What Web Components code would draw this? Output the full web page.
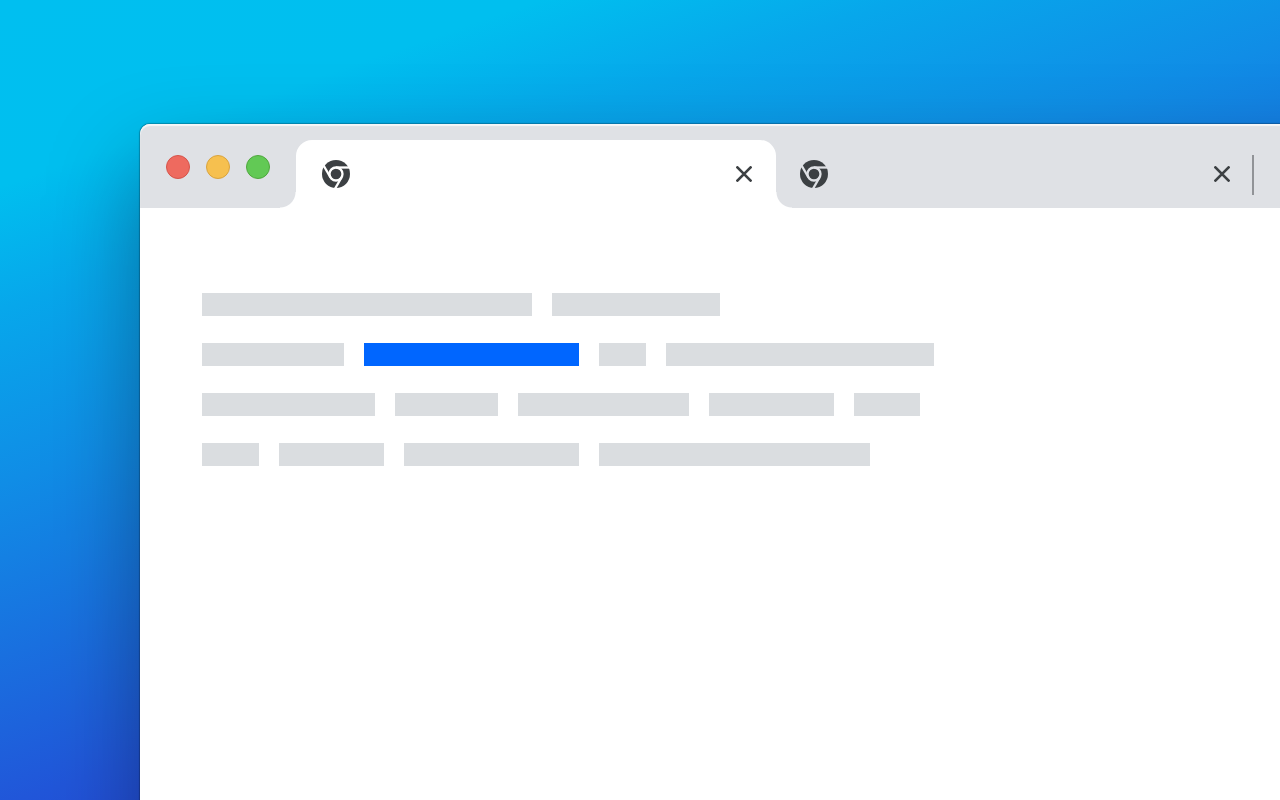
<!DOCTYPE html>
<html lang="en">
<head>
<meta charset="utf-8">
<title>Browser window</title>
<style>
  html, body { margin: 0; height: 100%; }
  body { overflow: hidden; font-family: Inter, "Liberation Sans", sans-serif; }
</style>
</head>
<body>
<desk-top>
  <browser-window>
    <window-controls slot="bar"></window-controls>
    <browser-tab slot="bar" active></browser-tab>
    <browser-tab slot="bar"></browser-tab>
    <text-skeleton rows="330 168|142 215* 47 268|173 103 171 125 66|57 105 175 271"></text-skeleton>
  </browser-window>
</desk-top>
<script>
const define = (name, html, setup) => customElements.define(name, class extends HTMLElement {
  constructor() {
    super();
    this.attachShadow({ mode: 'open' }).innerHTML = html;
  }
  connectedCallback() { if (setup) setup(this); }
});

define('desk-top', `
  <style>
    :host {
      display: flex; box-sizing: border-box; min-height: 100vh; overflow: hidden;
      padding: 124px 0 0 140px;
      background: linear-gradient(161deg, #00bff0 0%, #00bfef 15%, #07a7eb 25%, #108de6 39%, #2156d9 65%, #2838cf 82%);
    }
  </style>
  <slot></slot>`);

define('browser-window', `
  <style>
    :host {
      display: block; flex: 1; margin: 0 -160px -160px 0;
      border-radius: 10px 10px 0 0; background: #fff;
      box-shadow: 0 0 1px 1px rgba(0,0,0,.25), 0 40px 90px rgba(0,0,0,.34);
    }
    header {
      display: flex; height: 68px; padding-top: 16px;
      background: #dfe1e5; border-radius: 10px 10px 0 0;
      box-shadow: inset 0 2px 1px rgba(255,255,255,.7);
    }
    main { padding: 85px 62px; }
  </style>
  <header><slot name="bar"></slot></header>
  <main><slot></slot></main>`);

define('window-controls', `
  <style>
    :host { display: flex; gap: 16px; padding: 15px 26px 0; }
    button {
      width: 24px; height: 24px; padding: 0; border-radius: 50%;
      border: 1px solid var(--edge); background: var(--fill);
    }
    .close { --fill: #ee6a5f; --edge: #d5544a; }
    .min { --fill: #f6c04f; --edge: #d9a33e; }
    .max { --fill: #62c955; --edge: #4fa73d; }
  </style>
  <button class="close" aria-label="Close"></button>
  <button class="min" aria-label="Minimize"></button>
  <button class="max" aria-label="Maximize"></button>`);

define('browser-tab', `
  <style>
    :host {
      --bg: #dfe1e5;
      position: relative; display: flex; box-sizing: border-box; flex: none;
      align-items: center; justify-content: space-between;
      width: 480px; padding: 0 24px 0 26px; margin-left: -2px; color: #3c4043;
    }
    :host([active]) {
      --bg: #fff; z-index: 1; margin-left: 0;
      background: #fff; border-radius: 16px 16px 0 0;
    }
    :host([active])::before, :host([active])::after {
      content: ""; position: absolute; bottom: 0; width: 16px; height: 16px;
    }
    :host([active])::before { right: 100%; background: radial-gradient(circle at 0 0, transparent 15px, #fff 16px); }
    :host([active])::after { left: 100%; background: radial-gradient(circle at 100% 0, transparent 15px, #fff 16px); }
    :host(:not([active]))::after {
      content: ""; position: absolute; right: 0; top: 15px; width: 2px; height: 40px; background: #919397;
    }
    button { display: flex; padding: 0; border: 0; background: none; color: inherit; }
    svg { display: block; }
  </style>
  <svg width="28" height="28" viewBox="-14 -14 28 28" aria-hidden="true">
    <circle r="14" fill="currentColor"/>
    <g fill="none" stroke="var(--bg)" stroke-width="2.3">
      <circle r="6.5"/>
      <path d="M0-6.5H15"/>
      <path d="M0-6.5H15" transform="rotate(120)"/>
      <path d="M0-6.5H15" transform="rotate(240)"/>
    </g>
  </svg>
  <button aria-label="Close tab">
    <svg width="16" height="16" viewBox="0 0 16 16" aria-hidden="true">
      <path d="M1.4 1.4 14.6 14.6M14.6 1.4 1.4 14.6" stroke="currentColor" stroke-width="2.7" stroke-linecap="round"/>
    </svg>
  </button>`);

define('text-skeleton', `
  <style>
    :host { display: grid; gap: 27px; }
    .row { display: flex; gap: 20px; }
    .word { flex: none; height: 23px; background: #dadde0; }
    .marked { background: #0066ff; }
  </style>`, el => {
  for (const row of el.getAttribute('rows').split('|')) {
    const line = document.createElement('div');
    line.className = 'row';
    for (const word of row.split(' ')) {
      const block = document.createElement('div');
      block.className = word.endsWith('*') ? 'word marked' : 'word';
      block.style.width = parseInt(word, 10) + 'px';
      line.append(block);
    }
    el.shadowRoot.append(line);
  }
});
</script>
</body>
</html>
